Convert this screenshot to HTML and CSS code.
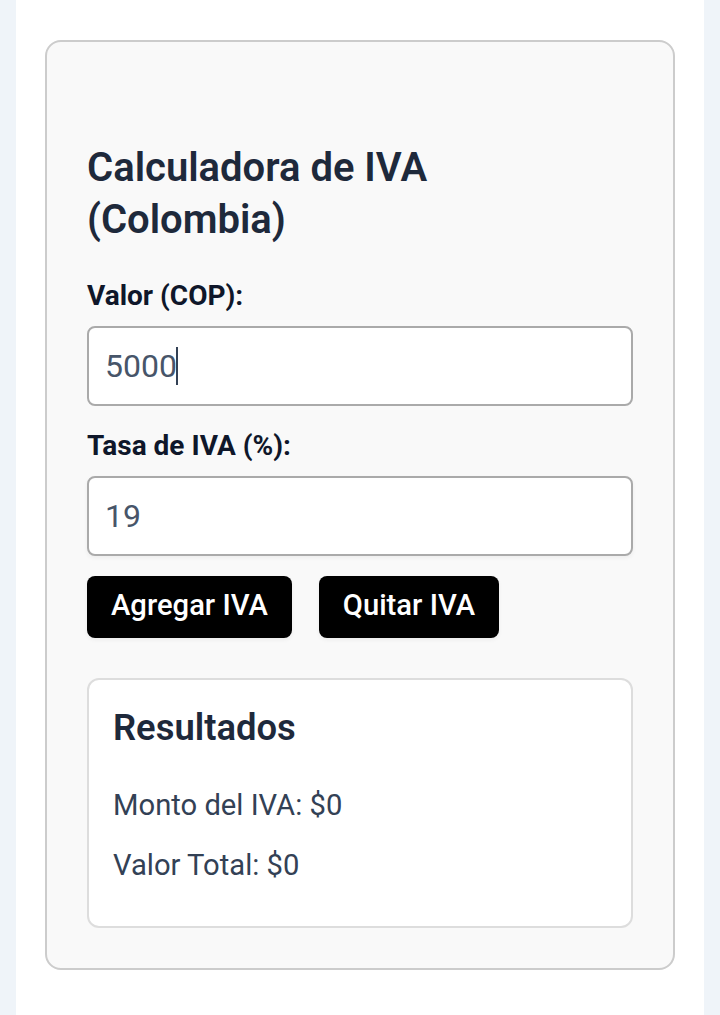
FILE: index.html
```html
<!DOCTYPE html>
<html lang="es">
<head>
  <meta charset="UTF-8">
  <meta name="viewport" content="width=device-width, initial-scale=1">
  <title>Calculadora de IVA (Colombia)</title>
  <link rel="stylesheet" href="styles.css">
</head>
<body>
  <main class="page">
    <section class="calculadora">
      <h2>Calculadora de IVA (Colombia)</h2>

      <label for="valor">Valor (COP):</label>
      <div class="campo">
        <input type="text" id="valor" inputmode="decimal" value="5000">
        <span class="cursor"></span>
      </div>

      <label for="tasa">Tasa de IVA (%):</label>
      <div class="campo">
        <input type="text" id="tasa" class="sombra" inputmode="decimal" value="19">
      </div>

      <div class="botones">
        <button type="button" onclick="calcular('agregar')">Agregar IVA</button>
        <button type="button" onclick="calcular('quitar')">Quitar IVA</button>
      </div>

      <div class="resultados">
        <h3>Resultados</h3>
        <p>Monto del IVA: $<span id="monto">0</span></p>
        <p>Valor Total: $<span id="total">0</span></p>
      </div>
    </section>
  </main>

  <script>
    function calcular(modo) {
      const valor = parseFloat(document.getElementById("valor").value) || 0;
      const tasa = (parseFloat(document.getElementById("tasa").value) || 0) / 100;
      const base = modo === "agregar" ? valor : valor / (1 + tasa);
      const iva = base * tasa;
      const total = modo === "agregar" ? base + iva : base;

      document.getElementById("monto").textContent = iva.toLocaleString("es-CO");
      document.getElementById("total").textContent = total.toLocaleString("es-CO");
    }
  </script>
</body>
</html>
```
FILE: styles.css
```css
* {
  box-sizing: border-box;
}
body {
  margin: 0;
  padding: 0 16px;
  background: #eff4f9;
  font-family: Roboto, sans-serif;
  color: #334155;
}
.page {
  min-height: 1015px;
  padding: 40px 29px 45px;
  background: #fff;
}
.calculadora {
  height: 930px;
  padding: 100px 40px 40px;
  background: #f9f9f9;
  border: 2px solid #ccc;
  border-radius: 16px;
}
h2 {
  margin: 0 0 28px;
  font-size: 40px;
  line-height: 52px;
  font-weight: 600;
  color: #1e293b;
}
label {
  display: block;
  height: 44px;
  margin-bottom: 8px;
  font-size: 28px;
  line-height: 44px;
  font-weight: 700;
  color: #0f172a;
}
.campo {
  position: relative;
  margin-bottom: 18px;
}
input {
  display: block;
  width: 100%;
  height: 80px;
  padding: 0 16px;
  border: 2px solid #aaa;
  border-radius: 8px;
  background: #fff;
  font-family: inherit;
  font-size: 32px;
  color: #475569;
}
.sombra {
  box-shadow: 0 2px 4px rgba(0, 0, 0, 0.05);
}
.cursor {
  position: absolute;
  left: 89px;
  top: 21px;
  width: 2px;
  height: 38px;
  background: #334155;
}
.botones {
  display: flex;
  gap: 27px;
  margin-top: 20px;
}
button {
  height: 62px;
  padding: 0 24px 4px;
  border: none;
  border-radius: 8px;
  background: #000;
  box-shadow: 0 2px 4px rgba(0, 0, 0, 0.05);
  color: #fff;
  font-family: inherit;
  font-size: 29.2px;
  font-weight: 500;
  cursor: pointer;
}
.resultados {
  height: 250px;
  margin-top: 40px;
  padding: 25px 24px 24px;
  background: #fff;
  border: 2px solid #ddd;
  border-radius: 12px;
}
h3 {
  margin: 0 0 30px;
  font-size: 36.4px;
  line-height: 46px;
  font-weight: 600;
  color: #1e293b;
}
.resultados p {
  margin: 0 0 12px;
  font-size: 29.2px;
  line-height: 48px;
}
```
